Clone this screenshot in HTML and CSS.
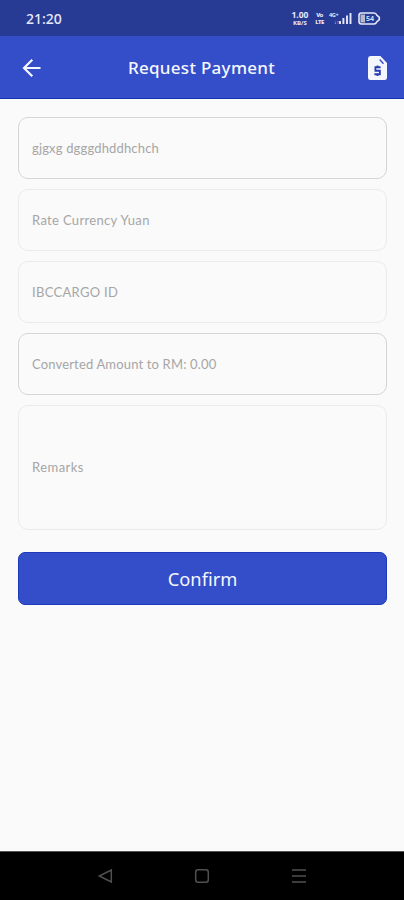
FILE: index.html
```html
<!DOCTYPE html>
<html lang="en">
<head>
<meta charset="utf-8">
<title>Request Payment</title>
<link rel="stylesheet" href="styles.css">
</head>
<body>
<div class="screen">
  <div class="status">
    <span class="clock">21:20</span>
    <div class="indicators">
      <div class="speed"><span class="rate">1.00</span><span class="unit">KB/S</span></div>
      <div class="volte"><span>Vo</span><span>LTE</span></div>
      <div class="signal">
        <div class="network"><span>4G+</span><span class="lower">↓↑</span></div>
        <svg width="13" height="13" viewBox="0 0 13 13"><path d="M1 9v3M4.400 6v6M8 3.500v8.500M11.500 1v11" stroke="currentColor" stroke-width="1.900"/></svg>
      </div>
      <svg class="battery" width="23" height="13" viewBox="0 0 23 13"><path d="M3.500 1h12.500q2 0 2.700 2l2.600 2.300v2.400l-2.600 2.300q-.7 2-2.700 2H3.500Q1 12 1 9.500v-6Q1 1 3.500 1z" fill="none" stroke="currentColor" stroke-width="1.600"/><path d="M2.500 2.500H7v8H2.500z" fill="#b9b8c8"/><text x="8" y="9.300" class="charge">54</text></svg>
    </div>
  </div>
  <header class="appbar">
    <svg class="back" width="20" height="20" viewBox="0 0 20 20"><path d="M18.500 10H2.500M10.300 1.800L2 10l8.300 8.200" fill="none" stroke="currentColor" stroke-width="2.200"/></svg>
    <h1>Request Payment</h1>
    <svg class="invoice" width="19" height="24" viewBox="0 0 20 24" preserveAspectRatio="none"><path d="M2.500 0H13l7 7v14.500q0 2.500-2.500 2.500h-15Q0 24 0 21.500v-19Q0 0 2.500 0z" fill="currentColor"/><path d="M12.300 3.500l4 4.300" fill="none" stroke="#344dc9" stroke-width="1.500"/><path d="M13.300 11.300H7.800v3.400h4.700v3.500H6.700M10 9.500v2M10 18v2" fill="none" stroke="#263caf" stroke-width="1.900"/></svg>
  </header>
  <main class="form">
    <div class="field strong"><span class="t1">gjgxg dgggdhddhchch</span></div>
    <div class="field"><span class="t2">Rate Currency Yuan</span></div>
    <div class="field"><span class="t3">IBCCARGO ID</span></div>
    <div class="field strong"><span class="t4">Converted Amount to RM: 0.00</span></div>
    <div class="field tall"><span class="t5">Remarks</span></div>
    <button class="confirm">Confirm</button>
  </main>
  <nav class="navbar">
    <svg width="16" height="16" viewBox="0 0 16 16"><path d="M14.300 2v12L2.300 8z"/></svg>
    <svg width="16" height="16" viewBox="0 0 16 16"><rect x="1.700" y="1.700" width="12.600" height="12.600" rx="2.500"/></svg>
    <svg width="16" height="16" viewBox="0 0 16 16"><path d="M1 2h14M1 8h14M1 14h14"/></svg>
  </nav>
</div>
</body>
</html>
```
FILE: styles.css
```css
* { box-sizing: border-box; }
body { margin: 0; background: #fafafa; }
.screen { width: 404px; height: 900px; display: flex; flex-direction: column; font-family: "Noto Sans", sans-serif; }
.status { height: 36px; background: #273a94; color: #e6e9fb; display: flex; align-items: center; justify-content: space-between; padding: 1px 23px 0 26px; }
.clock { font-size: 14px; font-weight: 500; line-height: 18px; }
.indicators { display: flex; align-items: center; height: 18px; }
.speed { width: 18px; display: flex; flex-direction: column; align-items: center; font-weight: 700; margin-right: 6px; }
.rate { font-size: 8.5px; line-height: 9px; }
.unit { font-size: 6px; line-height: 8px; }
.volte { width: 9px; display: flex; flex-direction: column; align-items: center; font-size: 6px; line-height: 7px; font-weight: 800; letter-spacing: -0.5px; margin-right: 5px; }
.signal { display: flex; align-items: center; margin-right: 6px; }
.network { width: 10px; display: flex; flex-direction: column; font-size: 5.5px; line-height: 7px; font-weight: 700; letter-spacing: -0.3px; }
.lower { text-align: right; }
.charge { font-size: 7px; font-weight: 600; fill: currentColor; }
.appbar { height: 63px; background: #344dc9; border-bottom: 1px solid #1734ae; color: #f5f7ff; display: flex; align-items: center; justify-content: space-between; padding: 2px 17px 0 22px; }
.appbar h1 { margin: 0 7px 0 0; font-size: 17px; line-height: 24px; font-weight: 500; letter-spacing: 0.3px; }
.form { flex: 1; padding: 18px 17px 0 18px; display: flex; flex-direction: column; gap: 10px; }
.field { height: 62px; border: 1px solid #ebebeb; border-radius: 10px; padding: 0 13px 1px; display: flex; align-items: center; font-family: Lato, sans-serif; font-size: 13px; line-height: 18px; color: #a6a6a6; }
.strong { border-color: #d5d5d5; }
.tall { height: 125px; }
.t1 { letter-spacing: 0.16px; }
.t2 { letter-spacing: 0.33px; }
.t3 { letter-spacing: 0.3px; }
.t4 { letter-spacing: 0.16px; }
.t5 { letter-spacing: 0.45px; }
.confirm { height: 53px; margin: 12px 0 0; padding: 0; border: 1px solid #1d3abb; border-radius: 7px; background: #344dc9; color: #f5f7ff; font-family: "Noto Sans", sans-serif; font-size: 18.3px; font-weight: 400; }
.navbar { height: 49px; background: #000; border-top: 1px solid #555; display: flex; justify-content: center; align-items: center; gap: 81px; }
.navbar svg { fill: none; stroke: #505050; stroke-width: 1.5; }
```
